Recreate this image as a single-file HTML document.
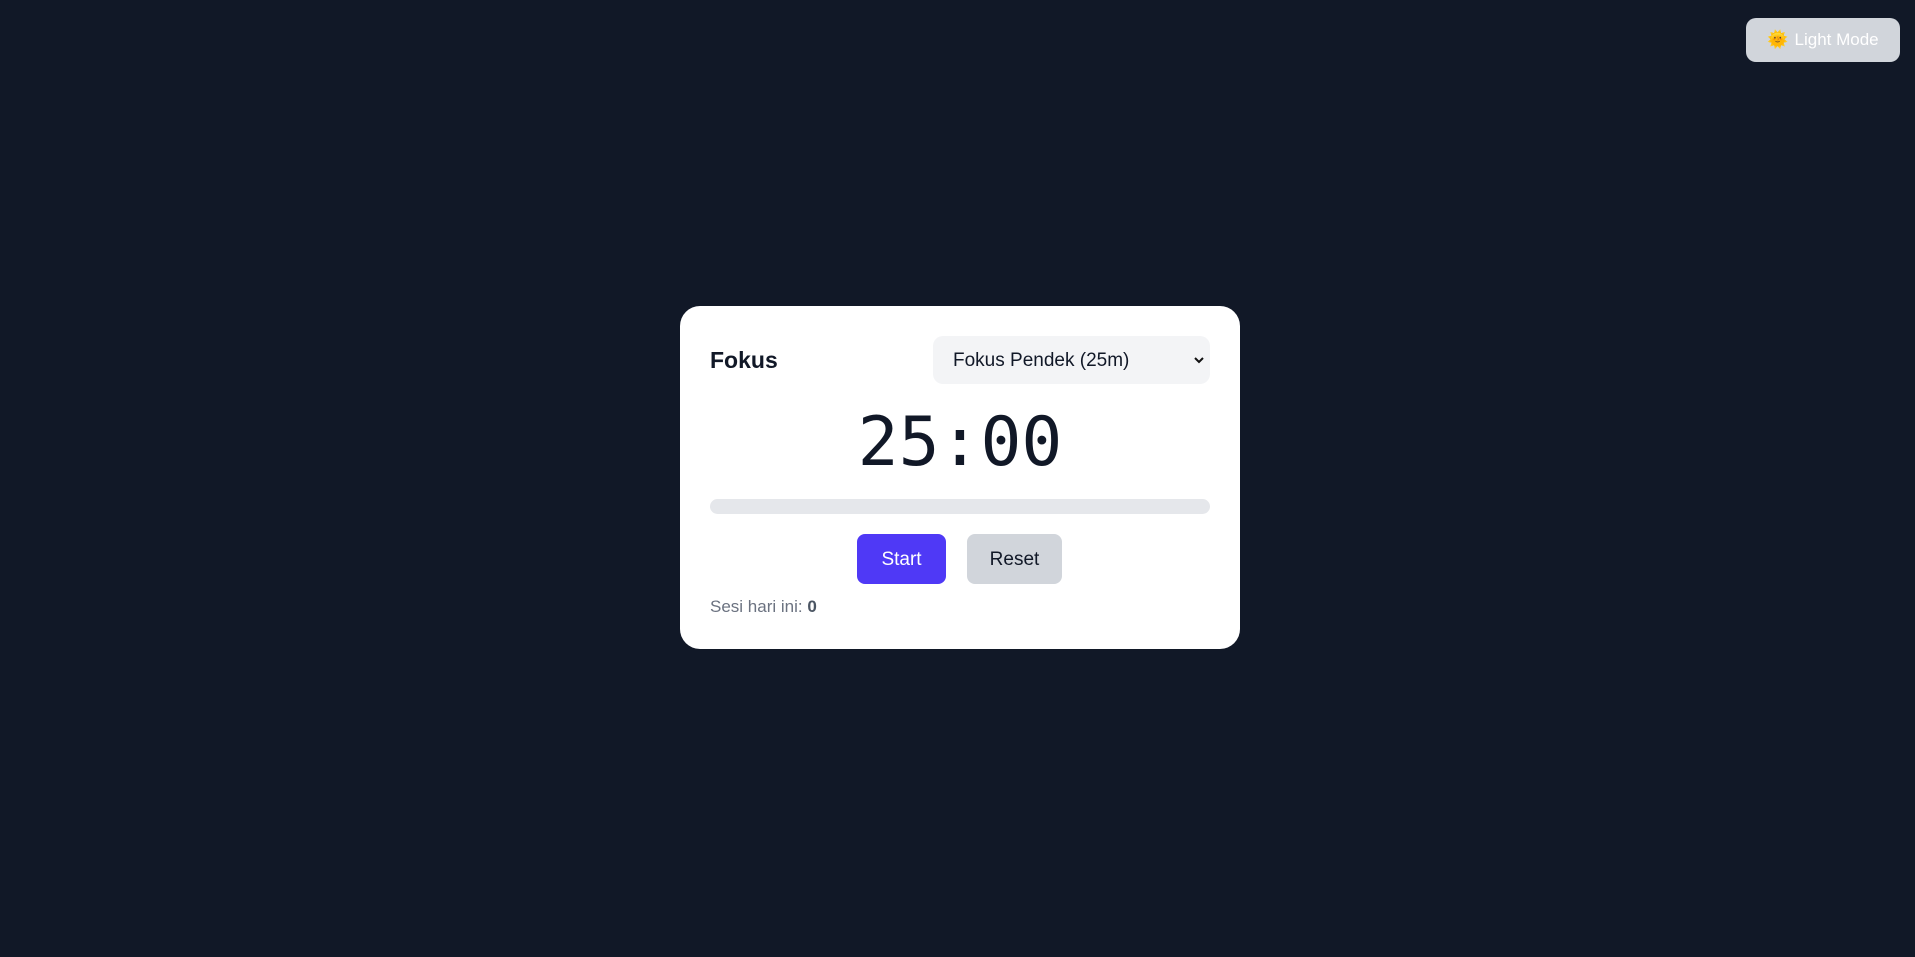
<!DOCTYPE html>
<html><head><meta charset="utf-8"><style>
html,body{margin:0;padding:0;width:1915px;height:957px;background:#111827;overflow:hidden;font-family:"Liberation Sans",sans-serif;}
.mode{position:absolute;left:1746px;top:18px;width:154px;height:44px;border-radius:10px;background:#d1d5db;color:#fff;font-size:17px;display:flex;align-items:center;justify-content:center;gap:6px;}
.card{position:absolute;left:680px;top:306px;width:560px;height:343px;background:#fff;border-radius:20px;}
.title{position:absolute;left:30px;top:41px;font-size:23px;font-weight:600;color:#111827;}
.sel{position:absolute;left:253px;top:30px;width:277px;height:48px;border-radius:10px;background:#f3f4f6;color:#111827;font-size:19px;}
.sel span{position:absolute;left:20px;top:14px;}
.sel svg{position:absolute;right:4px;top:19px;}
.timer{position:absolute;left:0;width:560px;top:95px;text-align:center;font-family:"DejaVu Sans Mono",monospace;font-size:68px;color:#111827;line-height:84px;}
.bar{position:absolute;left:30px;top:193px;width:500px;height:15px;border-radius:8px;background:#e5e7eb;}
.btn{position:absolute;top:228px;height:50px;border-radius:8px;font-size:19px;display:flex;align-items:center;justify-content:center;padding-top:2px;box-sizing:border-box;}
.start{left:177px;width:89px;background:#4f39f6;color:#fff;}
.reset{left:287px;width:95px;background:#d1d5db;color:#111827;}
.sesi{position:absolute;left:30px;top:291px;font-size:17px;color:#6b7280;}
.sesi b{color:#4b5563;font-weight:600;}
</style></head><body>
<div class="mode"><span style="font-size:17px">🌞</span><span>Light Mode</span></div>
<div class="card">
<div class="title">Fokus</div>
<div class="sel"><span>Fokus Pendek (25m)</span><svg width="14" height="10" viewBox="0 0 14 10"><path d="M3 3l4 4 4-4" stroke="#111" stroke-width="2" fill="none"/></svg></div>
<div class="timer">25:00</div>
<div class="bar"></div>
<div class="btn start">Start</div>
<div class="btn reset">Reset</div>
<div class="sesi">Sesi hari ini: <b>0</b></div>
</div>
</body></html>
